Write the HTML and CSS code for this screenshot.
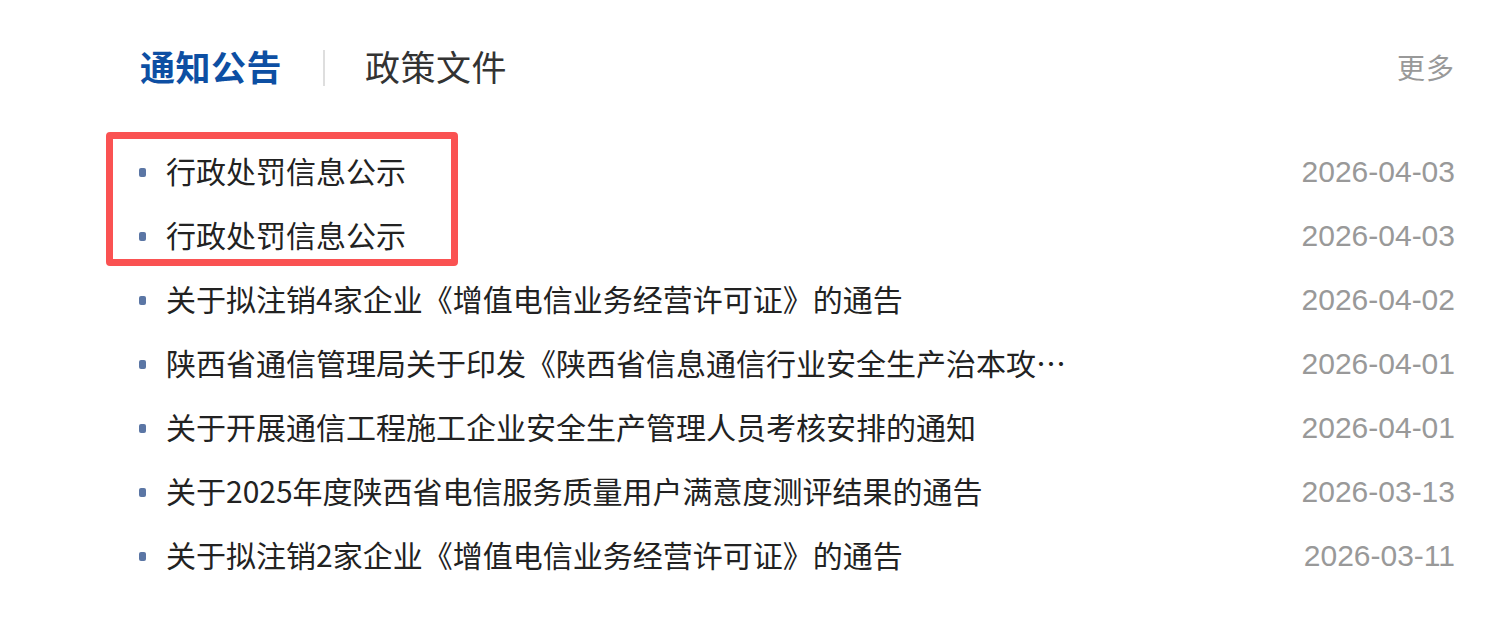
FILE: index.html
```html
<!DOCTYPE html>
<html lang="zh-CN">
<head>
<meta charset="utf-8">
<title>通知公告</title>
<link rel="stylesheet" href="styles.css">
</head>
<body>
<div class="panel">
  <div class="head">
    <div class="tabs">
      <span class="tab active">通知公告</span>
      <span class="sep"></span>
      <span class="tab">政策文件</span>
    </div>
    <a class="more" href="#">更多</a>
  </div>
  <ul class="list">
    <li class="row"><span class="dot"></span><span class="title">行政处罚信息公示</span><span class="date">2026-04-03</span></li>
    <li class="row"><span class="dot"></span><span class="title">行政处罚信息公示</span><span class="date">2026-04-03</span></li>
    <li class="row"><span class="dot"></span><span class="title">关于拟注销4家企业《增值电信业务经营许可证》的通告</span><span class="date">2026-04-02</span></li>
    <li class="row"><span class="dot"></span><span class="title">陕西省通信管理局关于印发《陕西省信息通信行业安全生产治本攻坚三年行动实施方案》的通知</span><span class="date">2026-04-01</span></li>
    <li class="row"><span class="dot"></span><span class="title">关于开展通信工程施工企业安全生产管理人员考核安排的通知</span><span class="date">2026-04-01</span></li>
    <li class="row"><span class="dot"></span><span class="title">关于2025年度陕西省电信服务质量用户满意度测评结果的通告</span><span class="date">2026-03-13</span></li>
    <li class="row"><span class="dot"></span><span class="title">关于拟注销2家企业《增值电信业务经营许可证》的通告</span><span class="date">2026-03-11</span></li>
  </ul>
  <div class="highlight"></div>
</div>
</body>
</html>
```
FILE: styles.css
```css
html, body {
  margin: 0;
  padding: 0;
  background: #fff;
}
body {
  font-family: "Noto Sans CJK SC", "Liberation Sans", sans-serif;
  color: #222;
}
.panel {
  position: relative;
  padding: 36px 31px 0 138px;
}
.head {
  height: 64px;
  display: flex;
  align-items: center;
  justify-content: space-between;
  margin-bottom: 40px;
}
.tabs {
  display: flex;
  align-items: center;
}
.tab {
  font-size: 35px;
  line-height: 40px;
  color: #333;
  letter-spacing: 0.5px;
  padding-bottom: 4px;
}
.tab.active {
  color: #0d4fa3;
  font-weight: bold;
  margin-left: 2px;
}
.sep {
  width: 2px;
  height: 36px;
  background: #dedede;
  margin: 0 40px 0 41px;
}
.more {
  font-size: 28px;
  color: #999;
  text-decoration: none;
  letter-spacing: 1px;
  padding-bottom: 2px;
}
.list {
  list-style: none;
  margin: 0;
  padding: 0;
}
.row {
  height: 64px;
  display: flex;
  align-items: center;
}
.dot {
  width: 7px;
  height: 9px;
  border-radius: 2px;
  background: #5b76a5;
  margin: 0 20px 0 1px;
  flex: none;
}
.title {
  font-size: 30px;
  line-height: 46px;
  color: #222;
  max-width: 900px;
  white-space: nowrap;
  overflow: hidden;
  text-overflow: ellipsis;
  margin-bottom: 5px;
}
.date {
  margin-left: auto;
  font-family: "Liberation Sans", sans-serif;
  font-size: 30px;
  color: #999;
  flex: none;
}
.highlight {
  position: absolute;
  left: 106px;
  top: 132px;
  width: 352px;
  height: 134px;
  box-sizing: border-box;
  border: 7px solid #fa5252;
  border-radius: 4px;
}
```
